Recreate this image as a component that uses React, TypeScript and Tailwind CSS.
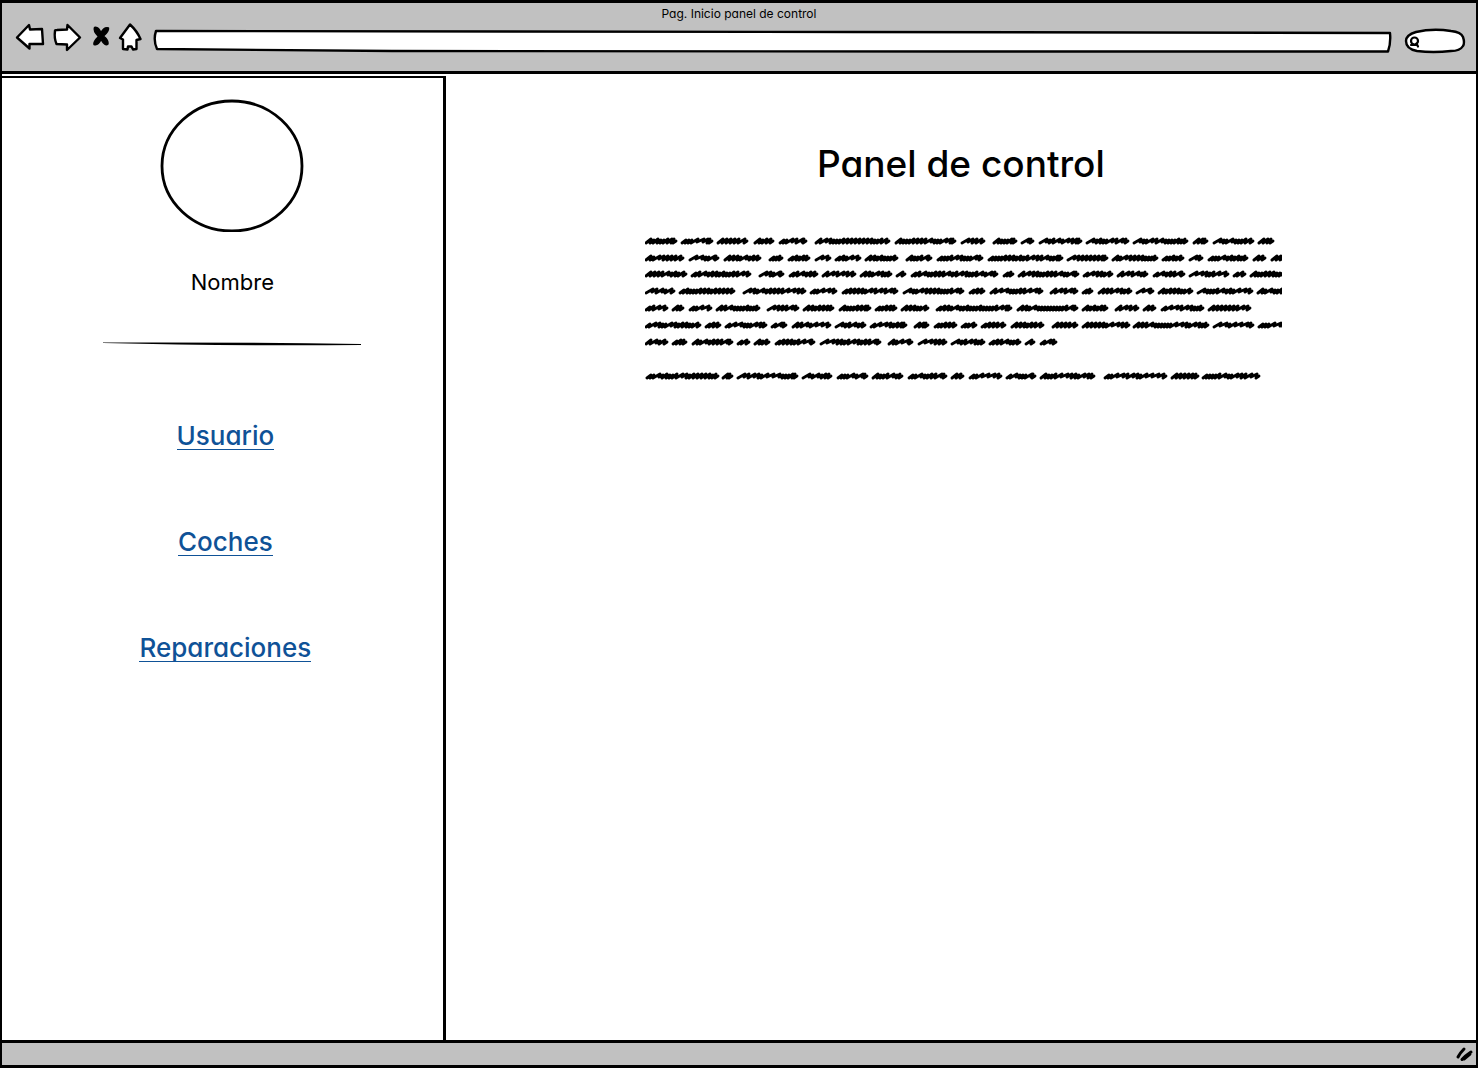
const INK = "#000";

// Start and end of every scribbled word, row by row.
const rows: { y: number; words: number[][] }[] = [
  { y: 8, words: [[0, 32], [36, 68], [72, 103], [109, 129], [134, 162], [170, 245], [250, 311], [316, 340], [348, 372], [376, 389], [394, 437], [441, 484], [488, 543], [548, 563], [568, 609], [613, 629]] },
  { y: 25, words: [[0, 39], [44, 74], [79, 116], [124, 138], [143, 165], [170, 186], [190, 216], [220, 253], [261, 287], [292, 338], [343, 418], [422, 463], [467, 513], [517, 539], [544, 558], [563, 603], [608, 621], [626, 642]] },
  { y: 41, words: [[0, 42], [46, 106], [114, 139], [144, 173], [177, 211], [215, 247], [251, 261], [266, 353], [358, 369], [373, 434], [438, 468], [472, 503], [508, 540], [544, 584], [588, 601], [605, 642]] },
  { y: 58, words: [[0, 30], [34, 90], [98, 161], [165, 192], [197, 253], [258, 319], [324, 340], [345, 398], [405, 433], [437, 448], [453, 487], [491, 509], [513, 548], [552, 608], [612, 642]] },
  { y: 75, words: [[0, 23], [27, 39], [44, 67], [71, 115], [122, 154], [158, 189], [194, 226], [230, 252], [256, 284], [291, 367], [372, 433], [437, 463], [470, 494], [498, 511], [516, 559], [563, 606]] },
  { y: 92, words: [[0, 56], [60, 76], [80, 122], [126, 142], [147, 186], [190, 221], [225, 262], [269, 284], [289, 312], [316, 332], [336, 361], [366, 399], [407, 433], [437, 485], [488, 564], [568, 609], [613, 642]] },
  { y: 109, words: [[0, 23], [27, 42], [47, 88], [92, 105], [109, 125], [130, 170], [175, 236], [243, 268], [273, 302], [306, 340], [344, 376], [380, 390], [395, 412]] },
  { y: 143, words: [[1, 74], [77, 88], [92, 153], [157, 187], [192, 223], [227, 258], [263, 302], [306, 319], [324, 357], [361, 391], [395, 450], [459, 522], [526, 554], [557, 615]] },
];

function scribble(start: number, end: number, y: number) {
  let seed = start * 7919 + y * 104729 + 7;
  let x = start + 1;
  let d = `M${x} ${y + 2}`;
  while (x < end - 9) {
    seed = (seed * 16807) % 2147483647;
    const kind = Math.floor(seed / 4096) % 5;
    if (kind === 0) {
      d += `L${x + 7} ${y - 2}L${x + 6} ${y + 1}`;
      x += 6;
    } else if (kind < 3) {
      d += `L${x + 5} ${y - 2}L${x + 4} ${y + 2}`;
      x += 4;
    } else {
      d += `L${x + 4} ${y - 1}L${x + 3} ${y + 2}`;
      x += 3;
    }
  }
  d += `L${end - 3} ${y - 2}L${end - 4} ${y + 2}L${end - 1} ${y}`;
  return d;
}

function ScribbledText() {
  return (
    <svg role="img" aria-label="Texto de ejemplo" viewBox="0 0 637 152" className="block w-[637px] max-w-full" fill="none" stroke={INK} strokeWidth="2.9" strokeLinecap="round" strokeLinejoin="round">
      {rows.map((row) => row.words.map(([a, b]) => <path key={`${row.y}-${a}`} d={scribble(a, b, row.y)} />))}
    </svg>
  );
}

const sketch = { fill: "#fff", stroke: INK, strokeWidth: 2.4, strokeLinejoin: "round", strokeLinecap: "round" } as const;

function Toolbar() {
  return (
    <div className="flex items-center pl-3 pr-2">
      <button aria-label="Atrás" className="block">
        <svg width="32" height="30" viewBox="-1 0 32 30" {...sketch}>
          <path d="M2 15.500L14 3L15 7.500L27 7L28 22H14.500L14.500 26.500Z" />
        </svg>
      </button>
      <button aria-label="Adelante" className="ml-1 block">
        <svg width="32" height="30" viewBox="3 0 32 30" {...sketch}>
          <path d="M8 9Q8 8 10 8L20 7.500L20.500 3L33 15.500L20 28V22.500L9.500 22Q7 16 8 9Z" />
        </svg>
      </button>
      <button aria-label="Detener" className="ml-2 block">
        <svg width="24" height="30" viewBox="2 0 24 30" fill={INK} stroke={INK} strokeWidth="1.500" strokeLinejoin="round">
          <path d="M6.500 5.500Q10.500 4.500 13 11Q15.500 5 20.500 6Q21 9 15.500 14Q20.500 18 20 22Q17 24.500 13 17.500Q10 24 6 22.500Q5 20 10.500 14.500Q5 9 6.500 5.500Z" />
        </svg>
      </button>
      <button aria-label="Inicio" className="ml-1 block">
        <svg width="26" height="30" viewBox="1 0 26 30" {...sketch}>
          <path d="M13 2.500L3 16L6 17.500L6 27L10.500 27.500L11 24.500H14.500L16 27.500L19.500 27V18L23.500 17Q20 9 13 2.500Z" />
        </svg>
      </button>
      <div className="relative ml-2 mt-2 h-6 flex-1">
        <svg aria-hidden="true" className="absolute inset-0 h-full w-full overflow-visible" viewBox="0 0 1240 24" preserveAspectRatio="none" {...sketch}>
          <path vectorEffect="non-scaling-stroke" d="M4 2L700 3L1238 4Q1239 14 1236 22.500L800 22.500L240 22L5 20Q1 11 4 2Z" />
        </svg>
        <input aria-label="Dirección" className="relative h-full w-full bg-transparent px-3 text-sm outline-none" />
      </div>
      <div className="relative ml-3 mt-2 h-6 w-16">
        <svg aria-hidden="true" className="absolute inset-0 overflow-visible" width="64" height="24" viewBox="1 1 64 24" {...sketch}>
          <path d="M3 13Q3 7 13 4Q30 0 48 3Q58 4 60 9Q62 15 60 18Q57 23 48 23Q30 25 14 23Q3 21 3 13Z" />
          <g fill="none" strokeWidth="2.200">
            <circle cx="11.500" cy="13" r="3.500" />
            <path d="M8 17H13M13.500 15.500L15 18.500" />
          </g>
        </svg>
        <input type="search" aria-label="Buscar" className="relative h-full w-full bg-transparent pl-5 pr-2 text-xs outline-none" />
      </div>
    </div>
  );
}

const links = ["Usuario", "Coches", "Reparaciones"];

export default function App() {
  return (
    <div className="flex min-h-screen flex-col border-x-2 border-black bg-white font-['Inter',sans-serif] text-black [font-feature-settings:'cv11']">
      <header className="h-[74px] border-y-3 border-black bg-[#c1c1c1]">
        <p className="h-[18px] text-center text-[12px] leading-[22px]">Pag. Inicio panel de control</p>
        <Toolbar />
      </header>
      <div className="flex flex-1">
        <aside className="mt-0.5 flex w-[30.1%] flex-col border-r-3 border-t-2 border-black">
          <div className="flex flex-col items-center pl-5 pt-5">
            <svg aria-hidden="true" width="144" height="134" viewBox="0 0 144 134" fill="none" stroke={INK} strokeWidth="2.8">
              <ellipse cx="72" cy="68" rx="70" ry="65" />
            </svg>
            <p className="mt-[34px] text-[22px] leading-8">Nombre</p>
            <svg aria-hidden="true" className="mt-11" width="258" height="4" viewBox="0 0 258 4">
              <path d="M0 .5Q130 0 258 2V3Q120 4 0 1Z" fill={INK} />
            </svg>
          </div>
          <nav className="mt-[68px] flex flex-col items-center gap-[70px] pl-1.5">
            {links.map((label) => (
              <a key={label} href="#" className="border-b border-current text-[26px] font-medium text-[#0f5297]">
                <span className="block h-[35px] leading-[43px]">{label}</span>
              </a>
            ))}
          </nav>
        </aside>
        <main className="flex flex-1 flex-col items-center">
          <h1 className="mt-16 text-[37px] font-medium leading-[52px]">Panel de control</h1>
          <div className="mt-[43px] pl-1.5">
            <ScribbledText />
          </div>
        </main>
      </div>
      <footer className="flex h-7 items-center justify-end border-y-3 border-black bg-[#c1c1c1]">
        <svg aria-hidden="true" width="22" height="18" viewBox="0 0 22 18" fill="none" stroke={INK} strokeWidth="3" strokeLinecap="round">
          <path d="M4 12Q6 8 10 4M8 14.500Q11 11 17 7M10 14L16 9" />
        </svg>
      </footer>
    </div>
  );
}
